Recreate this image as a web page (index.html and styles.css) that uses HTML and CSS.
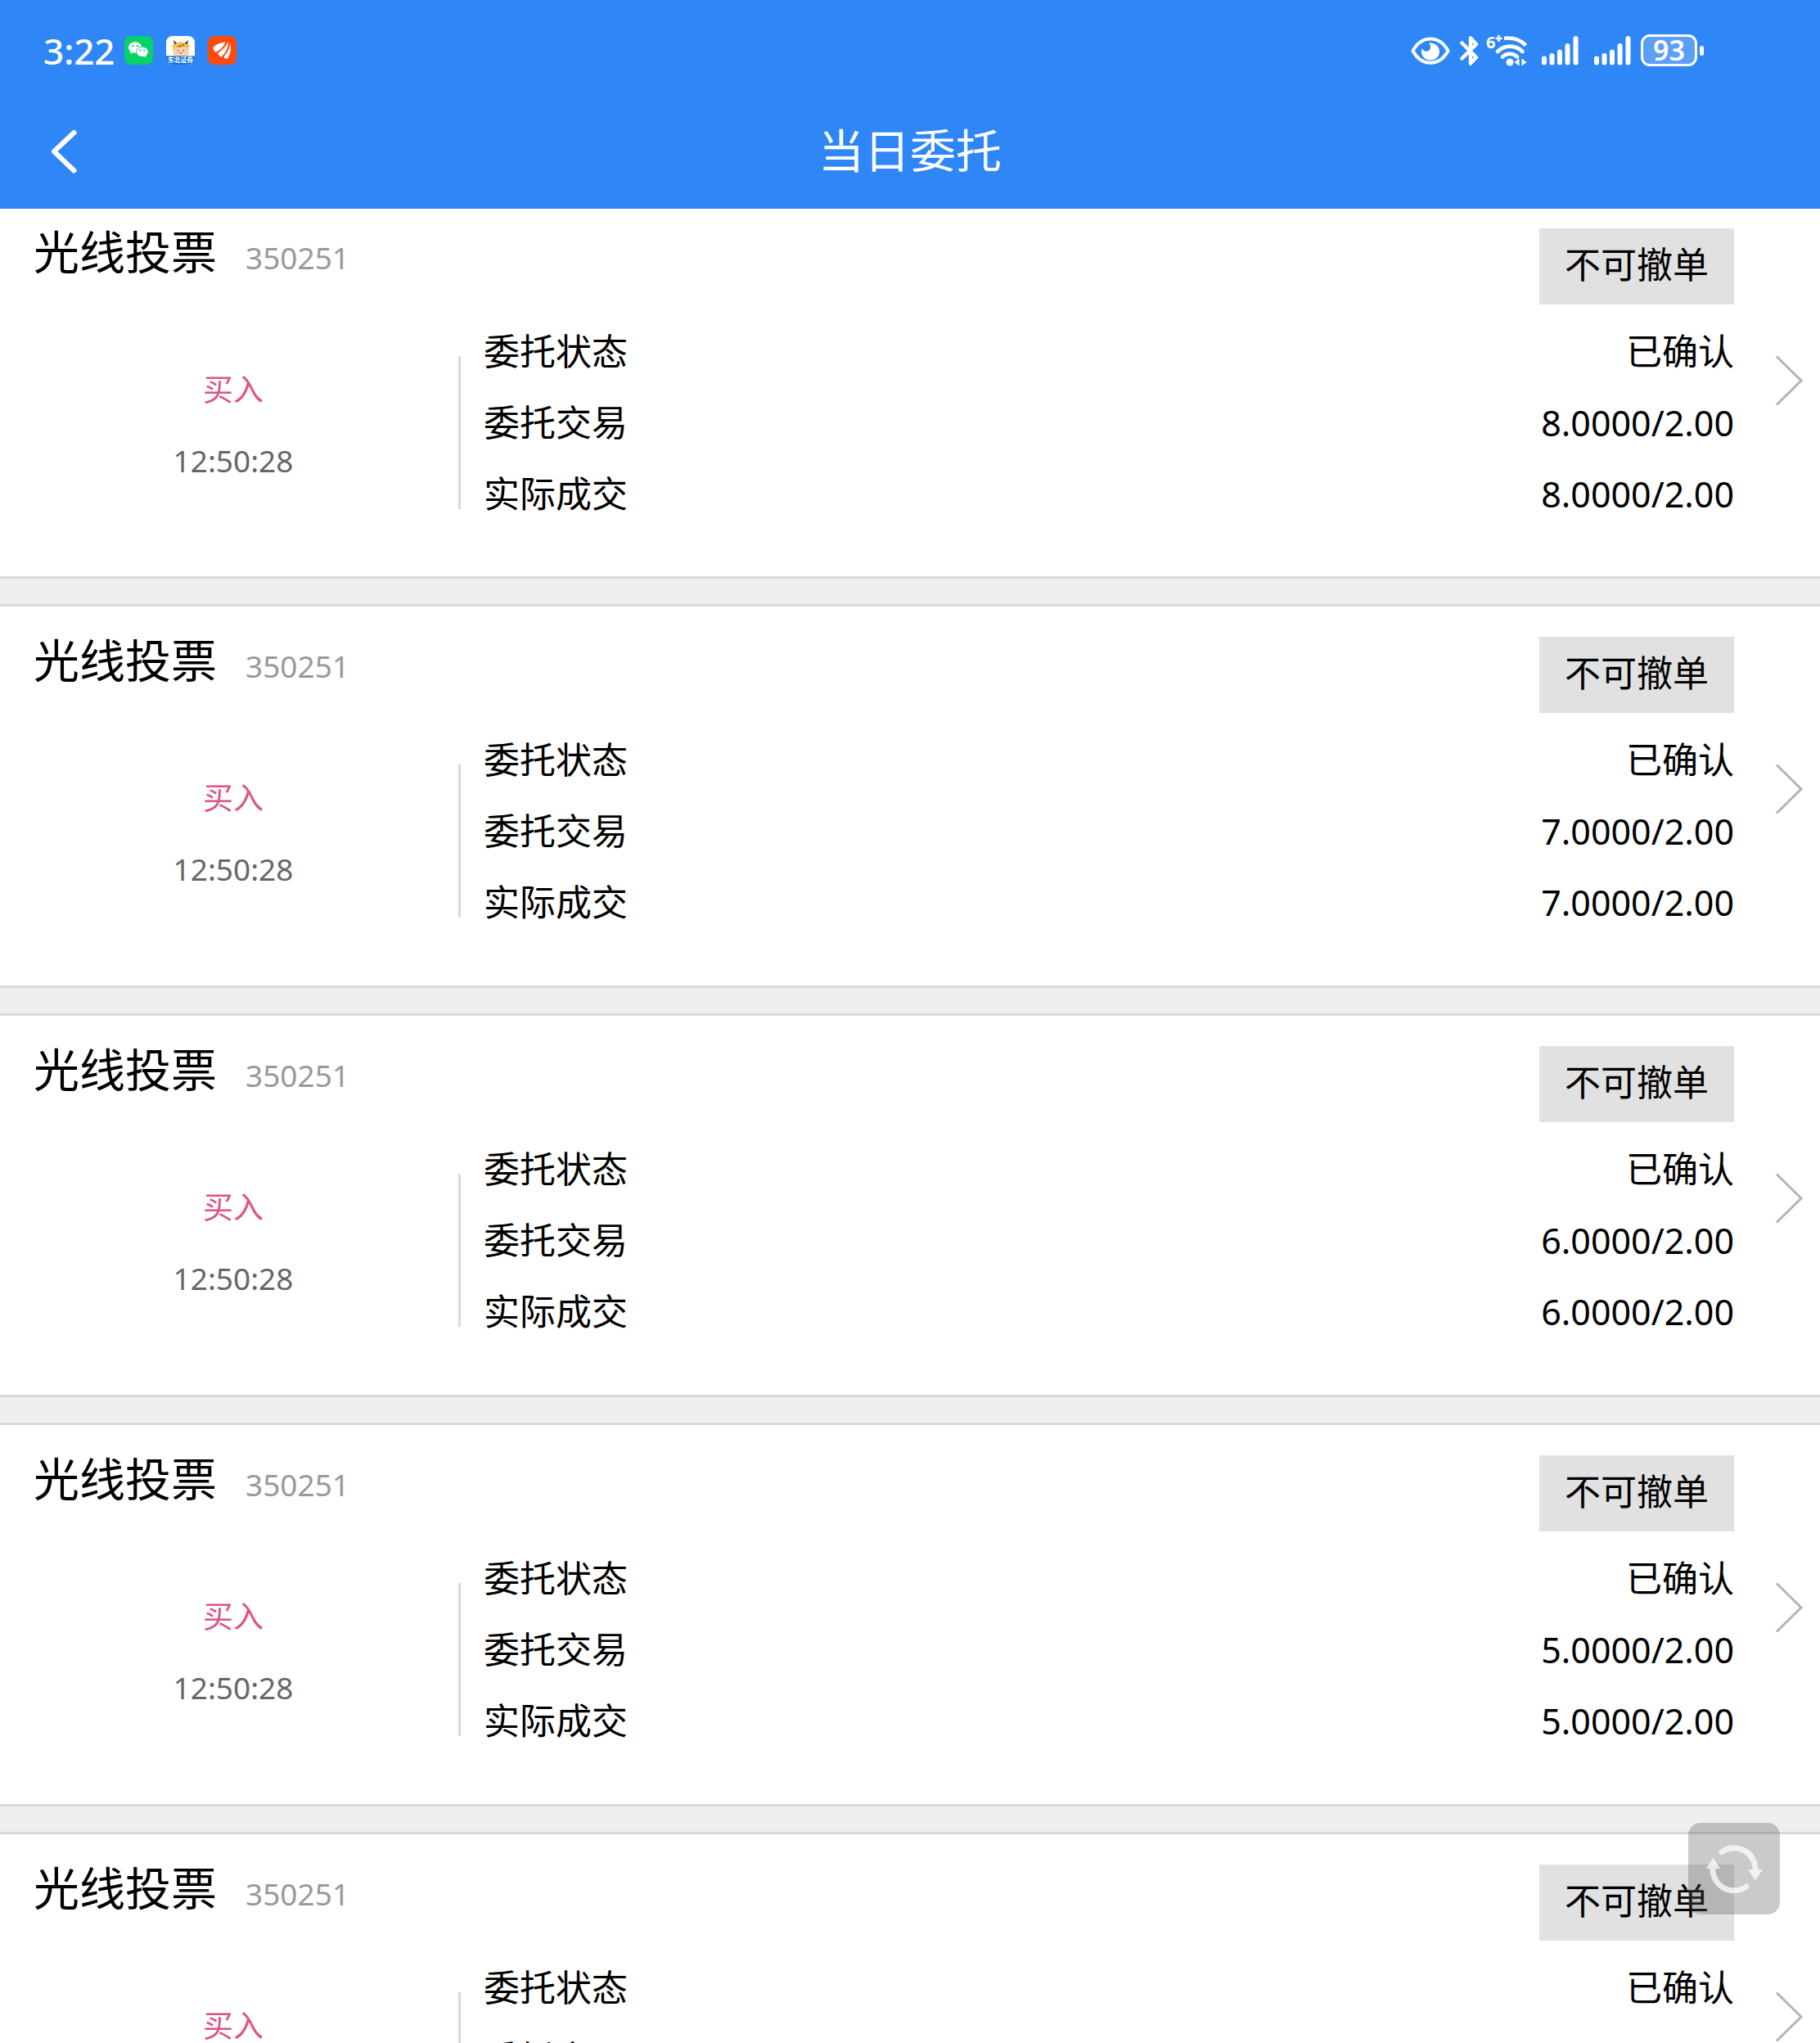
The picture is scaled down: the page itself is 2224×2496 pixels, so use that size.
FILE: index.html
```html
<!DOCTYPE html>
<html lang="zh-CN">
<head>
<meta charset="utf-8">
<meta name="viewport" content="width=device-width, initial-scale=1">
<title>当日委托</title>
<link rel="stylesheet" href="styles.css">
</head>
<body>
<svg class="defs" aria-hidden="true">
  <symbol id="arrow" viewBox="0 0 36 64"><path d="M3 2.500 33 32 3 61.500" fill="none" stroke="#b4b4b4" stroke-width="3"/></symbol>
  <symbol id="signal" viewBox="0 0 45 36"><path d="M3 27.500v5M12.500 24v8.500M22 19.500v13M31.500 12v20.500M41.500 3v29.500" fill="none" stroke="#fff" stroke-width="6" stroke-linecap="round"/></symbol>
</svg>
<header class="header">
  <div class="status">
    <time class="clock">3:22</time>
    <div class="apps">
      <svg class="app" viewBox="0 0 36 36" role="img" aria-label="微信">
        <rect width="36" height="36" rx="8" fill="#07d169"/>
        <path d="M13.500 7.500c-4.700 0-8.300 3.100-8.300 6.900 0 2.200 1.100 4.100 2.900 5.400l-.8 2.700 3-1.600c1 .3 2.100.4 3.200.4 4.700 0 8.300-3.100 8.300-6.900s-3.600-6.900-8.300-6.900z" fill="#fff"/>
        <path d="M22.500 13.600c-4.300 0-7.500 2.800-7.500 6.300s3.200 6.300 7.500 6.300c.9 0 1.700-.1 2.500-.3l3.100 1.600-.7-2.700c1.600-1.200 2.600-2.900 2.600-4.900 0-3.500-3.200-6.300-7.500-6.300z" fill="#fff" stroke="#07d169"/>
        <g fill="#07b95b"><circle cx="10.800" cy="12.500" r="1.200"/><circle cx="16.500" cy="12.500" r="1.200"/><circle cx="20" cy="18" r="1"/><circle cx="25" cy="18" r="1"/></g>
      </svg>
      <svg class="app" viewBox="0 0 36 36" role="img" aria-label="东北证券">
        <clipPath id="tile"><rect width="36" height="36" rx="8"/></clipPath>
        <g clip-path="url(#tile)">
          <rect width="36" height="36" fill="#fff"/>
          <path d="M9.500 24C7 14 11 7.500 18.500 7.500S30 14 27.500 24z" fill="#f6c443"/>
          <path d="M6.500 11.500 11 10l2 3-3 2.500zM30.500 11.500 26 10l-2 3 3 2.500z" fill="#f6c443"/>
          <path d="M10 5c.4 2 1.500 3 3.500 3.500l-2 2C9.500 9.500 9 7 10 5zM27 5c-.4 2-1.500 3-3.500 3.500l2 2C27.500 9.500 28 7 27 5z" fill="#3a2a18"/>
          <ellipse cx="18.500" cy="20" rx="9" ry="7.500" fill="#fbd3b4"/>
          <path d="M14 14.500 17 12l1 1.500 4-3 .5 2" fill="none" stroke="#9a5b23" stroke-width="1.200"/>
          <path d="M16 20.500q2.500 2 5 0" fill="none" stroke="#c85a3a"/>
          <circle cx="15" cy="18" r=".8" fill="#6b3a20"/><circle cx="22" cy="18" r=".8" fill="#6b3a20"/>
          <rect y="25" width="36" height="11" fill="#1673d8"/>
          <text x="18" y="33" class="app-label">东北证券</text>
        </g>
      </svg>
      <svg class="app" viewBox="0 0 36 36" role="img" aria-label="东方财富">
        <rect width="36" height="36" rx="8" fill="#ff4a0c"/>
        <g fill="#fff">
          <path d="M22 7.500C16 8.500 10 10.500 6.500 14.500 7 17 8 19 10 20.500 15 17.500 20.500 13.500 22 7.500z"/>
          <path d="M25.300 6.500C24 13 18 17 12.500 21.800c1 2 2.200 3.500 4 4.500C22.500 21.500 26.500 14 25.300 6.500z"/>
          <path d="M27.800 9C28 16 24 21 20 26.200c1 1.300 2.200 2.300 4 2.800C28.500 23.500 30 15 27.800 9z"/>
        </g>
      </svg>
    </div>
    <div class="indicators">
      <svg width="48" height="36" viewBox="0 0 48 36" role="img" aria-label="护眼模式">
        <path d="M2.500 18C13-1.500 35-1.500 45.500 18 35 37.500 13 37.500 2.500 18z" fill="none" stroke="#fff" stroke-width="4" stroke-linejoin="round"/>
        <path d="M22 8.200c9 0 13 5.300 13 10.800 0 6-4.500 10.500-10.800 10.500C17.500 29.500 13 25 13 19c0-1.500.3-2.800.8-4 1 2.500 3 3.800 5.200 3.800 3 0 5-2.200 5-5 0-2.300-.8-4.300-2-5.600z" fill="#fff"/>
      </svg>
      <svg class="bluetooth" width="24" height="38" viewBox="0 0 24 38" role="img" aria-label="蓝牙">
        <path d="M2.500 9.500 20 27l-7 7.500v-31L20 11 2.500 28.500" fill="none" stroke="#fff" stroke-width="4.500" stroke-linecap="round" stroke-linejoin="round"/>
      </svg>
      <svg class="wifi" width="52" height="40" viewBox="0 0 52 40" role="img" aria-label="WLAN">
        <text x="0" y="17" class="wifi-gen">6</text>
        <path d="M11.500 5h8M15.500 1v8" stroke="#fff" stroke-width="2.500"/>
        <g fill="none" stroke="#fff" stroke-width="4.600">
          <path d="M22 4.800C32 3.800 42 6.500 48.500 13.500"/>
          <path d="M14 21c8.500-8.500 22-8.500 30.500 0" stroke-linecap="round"/>
          <path d="M20 27.500c5-5 13-5 18 0" stroke-linecap="round"/>
        </g>
        <circle cx="29" cy="34" r="4.500" fill="#fff"/>
        <path d="M34.500 34l6-4.500v9zM49.500 34l-6-4.500v9z" fill="#fff"/>
      </svg>
      <svg class="signal" width="45" height="36" role="img" aria-label="卡一信号"><use href="#signal"/></svg>
      <svg class="signal" width="45" height="36" role="img" aria-label="卡二信号"><use href="#signal"/></svg>
      <span class="battery">93</span>
    </div>
  </div>
  <div class="navbar">
    <button class="back" type="button" aria-label="返回">
      <svg width="34" height="56" viewBox="0 0 34 56"><path d="M29.500 5 5 28l24.500 23.500" fill="none" stroke="#fff" stroke-width="6" stroke-linecap="round" stroke-linejoin="round"/></svg>
    </button>
    <h1 class="title">当日委托</h1>
  </div>
</header>

<main class="content">
  <ul class="orders">
    <li class="order">
      <div class="order-head">
        <h2 class="name">光线投票</h2><span class="code">350251</span>
        <button class="cancel" type="button">不可撤单</button>
      </div>
      <div class="order-body">
        <div class="side"><span class="buy">买入</span><time>12:50:28</time></div>
        <dl class="facts">
          <div><dt>委托状态</dt><dd>已确认</dd></div>
          <div><dt>委托交易</dt><dd class="num">8.0000/2.00</dd></div>
          <div><dt>实际成交</dt><dd class="num">8.0000/2.00</dd></div>
        </dl>
        <a class="more" href="#" aria-label="详情"><svg width="36" height="64"><use href="#arrow"/></svg></a>
      </div>
    </li>
    <li class="order">
      <div class="order-head">
        <h2 class="name">光线投票</h2><span class="code">350251</span>
        <button class="cancel" type="button">不可撤单</button>
      </div>
      <div class="order-body">
        <div class="side"><span class="buy">买入</span><time>12:50:28</time></div>
        <dl class="facts">
          <div><dt>委托状态</dt><dd>已确认</dd></div>
          <div><dt>委托交易</dt><dd class="num">7.0000/2.00</dd></div>
          <div><dt>实际成交</dt><dd class="num">7.0000/2.00</dd></div>
        </dl>
        <a class="more" href="#" aria-label="详情"><svg width="36" height="64"><use href="#arrow"/></svg></a>
      </div>
    </li>
    <li class="order">
      <div class="order-head">
        <h2 class="name">光线投票</h2><span class="code">350251</span>
        <button class="cancel" type="button">不可撤单</button>
      </div>
      <div class="order-body">
        <div class="side"><span class="buy">买入</span><time>12:50:28</time></div>
        <dl class="facts">
          <div><dt>委托状态</dt><dd>已确认</dd></div>
          <div><dt>委托交易</dt><dd class="num">6.0000/2.00</dd></div>
          <div><dt>实际成交</dt><dd class="num">6.0000/2.00</dd></div>
        </dl>
        <a class="more" href="#" aria-label="详情"><svg width="36" height="64"><use href="#arrow"/></svg></a>
      </div>
    </li>
    <li class="order">
      <div class="order-head">
        <h2 class="name">光线投票</h2><span class="code">350251</span>
        <button class="cancel" type="button">不可撤单</button>
      </div>
      <div class="order-body">
        <div class="side"><span class="buy">买入</span><time>12:50:28</time></div>
        <dl class="facts">
          <div><dt>委托状态</dt><dd>已确认</dd></div>
          <div><dt>委托交易</dt><dd class="num">5.0000/2.00</dd></div>
          <div><dt>实际成交</dt><dd class="num">5.0000/2.00</dd></div>
        </dl>
        <a class="more" href="#" aria-label="详情"><svg width="36" height="64"><use href="#arrow"/></svg></a>
      </div>
    </li>
    <li class="order">
      <div class="order-head">
        <h2 class="name">光线投票</h2><span class="code">350251</span>
        <button class="cancel" type="button">不可撤单</button>
      </div>
      <div class="order-body">
        <div class="side"><span class="buy">买入</span><time>12:50:28</time></div>
        <dl class="facts">
          <div><dt>委托状态</dt><dd>已确认</dd></div>
          <div><dt>委托交易</dt><dd class="num">4.0000/2.00</dd></div>
          <div><dt>实际成交</dt><dd class="num">4.0000/2.00</dd></div>
        </dl>
        <a class="more" href="#" aria-label="详情"><svg width="36" height="64"><use href="#arrow"/></svg></a>
      </div>
    </li>
  </ul>
</main>

<button class="refresh" type="button" aria-label="刷新">
  <svg width="112" height="112" viewBox="0 0 112 112">
    <g fill="none" stroke="#fff" stroke-width="7" stroke-linecap="round">
      <path d="M41 35.500A26 26 0 0 1 82 57"/>
      <path d="M71 78A26 26 0 0 1 30 55"/>
    </g>
    <path d="M73 57h18l-9 13.500zM22 56h17l-8.500-13.500z" fill="#fff"/>
  </svg>
</button>
</body>
</html>
```
FILE: styles.css
```css
* { box-sizing: border-box; }

body {
  margin: 0;
  height: 100vh;
  display: flex;
  flex-direction: column;
  overflow: hidden;
  background: #fff;
  color: #000;
  font: 44px/87px "Noto Sans", "Noto Sans CJK SC", sans-serif;
}

h1, h2, ul, dl, dd { margin: 0; padding: 0; font-weight: 400; }
ul { list-style: none; }
svg { display: block; flex: none; }
button { border: 0; padding: 0; color: inherit; font: inherit; cursor: pointer; }
.defs { position: absolute; width: 0; height: 0; }

/* Header: system status row and page title */
.header { flex: none; background: #2f86f7; color: #fff; }

.status {
  display: flex;
  align-items: center;
  height: 123px;
  padding: 0 142px 0 53px;
}
.clock { font-size: 44px; font-weight: 500; line-height: 60px; }
.apps { display: flex; gap: 16px; margin-left: 12px; }
.app { width: 35px; height: 35px; }
.app-label { fill: #fff; font-size: 8px; font-weight: 700; text-anchor: middle; }

.indicators { display: flex; align-items: center; margin-left: auto; }
.bluetooth { margin-left: 12px; }
.wifi { margin-left: 8px; overflow: visible; }
.wifi-gen { fill: #fff; font-size: 20px; font-weight: 700; }
.signal { margin-left: 16px; }
.signal + .signal { margin-left: 19px; }
.battery {
  position: relative;
  width: 69px;
  height: 39px;
  margin: 0 8px 0 12px;
  border: 3px solid #fff;
  border-radius: 11px;
  background: #5c9ff9;
  font-size: 34px;
  font-weight: 600;
  line-height: 33px;
  text-align: center;
}
.battery::after {
  content: "";
  position: absolute;
  top: 11px;
  right: -11px;
  width: 5px;
  height: 12px;
  border-radius: 3px;
  background: #fff;
}

.navbar {
  display: grid;
  grid-template-columns: 101px 1fr 101px;
  align-items: center;
  height: 132px;
  padding-bottom: 8px;
}
.back { justify-self: end; width: 40px; background: none; }
.title { padding-bottom: 4px; font-size: 56px; line-height: 60px; text-align: center; }

/* Order list */
.content { flex: 1; min-height: 0; overflow-y: auto; scrollbar-width: none; background: #efefef; }
.orders { display: flex; flex-direction: column; gap: 31px; }
.order {
  padding: 38px 0 57px;
  border: solid #d8d8d8;
  border-width: 3px 0;
  background: #fff;
}
.order:first-child { padding-top: 24px; border-top: 0; }
.order + .order { padding-top: 37px; padding-bottom: 58px; }

.order-head {
  display: flex;
  align-items: baseline;
  height: 93px;
  padding: 0 105px 0 41px;
}
.name { font-size: 56px; line-height: 56px; }
.code { margin-left: 35px; color: #999; font-size: 37px; line-height: 56px; }
.cancel {
  align-self: flex-start;
  width: 238px;
  height: 93px;
  margin-left: auto;
  padding-bottom: 4px;
  background: #e1e1e1;
}

.order-body { display: flex; margin-top: 14px; padding-right: 20px; }
.side {
  display: flex;
  flex-direction: column;
  align-items: center;
  gap: 6px;
  width: 563px;
  height: 187px;
  margin-top: 49px;
  padding-left: 10px;
  border-right: 3px solid #d8d8d8;
  color: #666;
  font-size: 37px;
  line-height: 81px;
}
.buy { color: #dc5587; }
.facts { flex: 1; margin-left: 28px; }
.facts div { display: flex; justify-content: space-between; }
.num { font-size: 43px; }
.more { margin: 47px 0 0 49px; }

/* Floating refresh control */
.refresh {
  position: fixed;
  right: 49px;
  bottom: 157px;
  width: 112px;
  height: 112px;
  border-radius: 15px;
  background: rgba(84, 84, 84, 0.31);
}
.refresh svg { opacity: 0.75; }
```
